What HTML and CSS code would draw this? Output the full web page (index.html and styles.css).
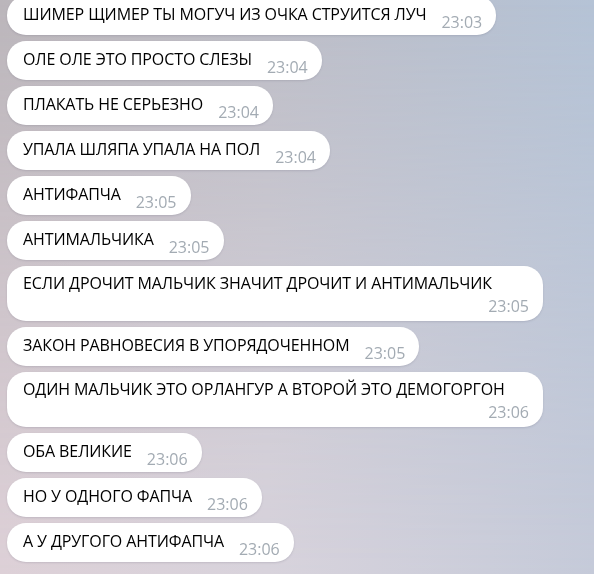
FILE: index.html
```html
<!DOCTYPE html>
<html lang="ru">
<head>
<meta charset="utf-8">
<title>Чат</title>
<link rel="stylesheet" href="styles.css">
</head>
<body>
<div class="chat">
  <div class="bubble first"><span class="text">ШИМЕР ЩИМЕР ТЫ МОГУЧ ИЗ ОЧКА СТРУИТСЯ ЛУЧ</span><span class="time">23:03</span></div>
  <div class="bubble"><span class="text">ОЛЕ ОЛЕ ЭТО ПРОСТО СЛЕЗЫ</span><span class="time">23:04</span></div>
  <div class="bubble"><span class="text">ПЛАКАТЬ НЕ СЕРЬЕЗНО</span><span class="time">23:04</span></div>
  <div class="bubble"><span class="text">УПАЛА ШЛЯПА УПАЛА НА ПОЛ</span><span class="time">23:04</span></div>
  <div class="bubble"><span class="text">АНТИФАПЧА</span><span class="time">23:05</span></div>
  <div class="bubble"><span class="text">АНТИМАЛЬЧИКА</span><span class="time">23:05</span></div>
  <div class="bubble long"><span class="text">ЕСЛИ ДРОЧИТ МАЛЬЧИК ЗНАЧИТ ДРОЧИТ И АНТИМАЛЬЧИК</span><span class="time">23:05</span></div>
  <div class="bubble"><span class="text">ЗАКОН РАВНОВЕСИЯ В УПОРЯДОЧЕННОМ</span><span class="time">23:05</span></div>
  <div class="bubble long"><span class="text">ОДИН МАЛЬЧИК ЭТО ОРЛАНГУР А ВТОРОЙ ЭТО ДЕМОГОРГОН</span><span class="time">23:06</span></div>
  <div class="bubble"><span class="text">ОБА ВЕЛИКИЕ</span><span class="time">23:06</span></div>
  <div class="bubble"><span class="text">НО У ОДНОГО ФАПЧА</span><span class="time">23:06</span></div>
  <div class="bubble"><span class="text">А У ДРУГОГО АНТИФАПЧА</span><span class="time">23:06</span></div>
</div>
</body>
</html>
```

FILE: styles.css
```css
html {
  height: 100%;
  background: linear-gradient(to right, #bbb6bb 0%, #bdbdc6 45%, #b5c3d6 100%);
}

body {
  margin: 0;
  min-height: 100%;
  overflow: hidden;
  font-family: "Open Sans", "Noto Sans", sans-serif;
  position: relative;
}

body::before {
  content: "";
  position: fixed;
  inset: 0;
  z-index: -1;
  background: linear-gradient(to right, #ddd0d7 0%, #d8d3dc 45%, #c5cad9 100%);
  -webkit-mask-image: linear-gradient(to bottom, transparent 0%, rgba(0,0,0,0.55) 50%, #000 100%);
  mask-image: linear-gradient(to bottom, transparent 0%, rgba(0,0,0,0.55) 50%, #000 100%);
}

.chat {
  display: flex;
  flex-direction: column;
  align-items: flex-start;
  gap: 6px;
  padding: 0 0 0 7px;
}

.bubble {
  display: flex;
  align-items: flex-start;
  background: #ffffff;
  border-radius: 19px;
  padding: 8px 14px 3px 16px;
  box-shadow: 0 1px 2px rgba(80, 80, 100, 0.18);
  box-sizing: border-box;
}

.bubble.first {
  margin-top: -4px;
}

.text {
  font-size: 16px;
  line-height: 20px;
  letter-spacing: -0.1px;
  color: #000000;
  white-space: nowrap;
}

.time {
  font-size: 16px;
  line-height: 20px;
  color: #a3abb3;
  margin-left: 15px;
  margin-top: 8px;
  white-space: nowrap;
}

.bubble.long {
  flex-direction: column;
  width: 536px;
  padding: 7px 14px 5px 16px;
}

.bubble.long .time {
  align-self: flex-end;
  margin-top: 3px;
  margin-left: 0;
}
```
